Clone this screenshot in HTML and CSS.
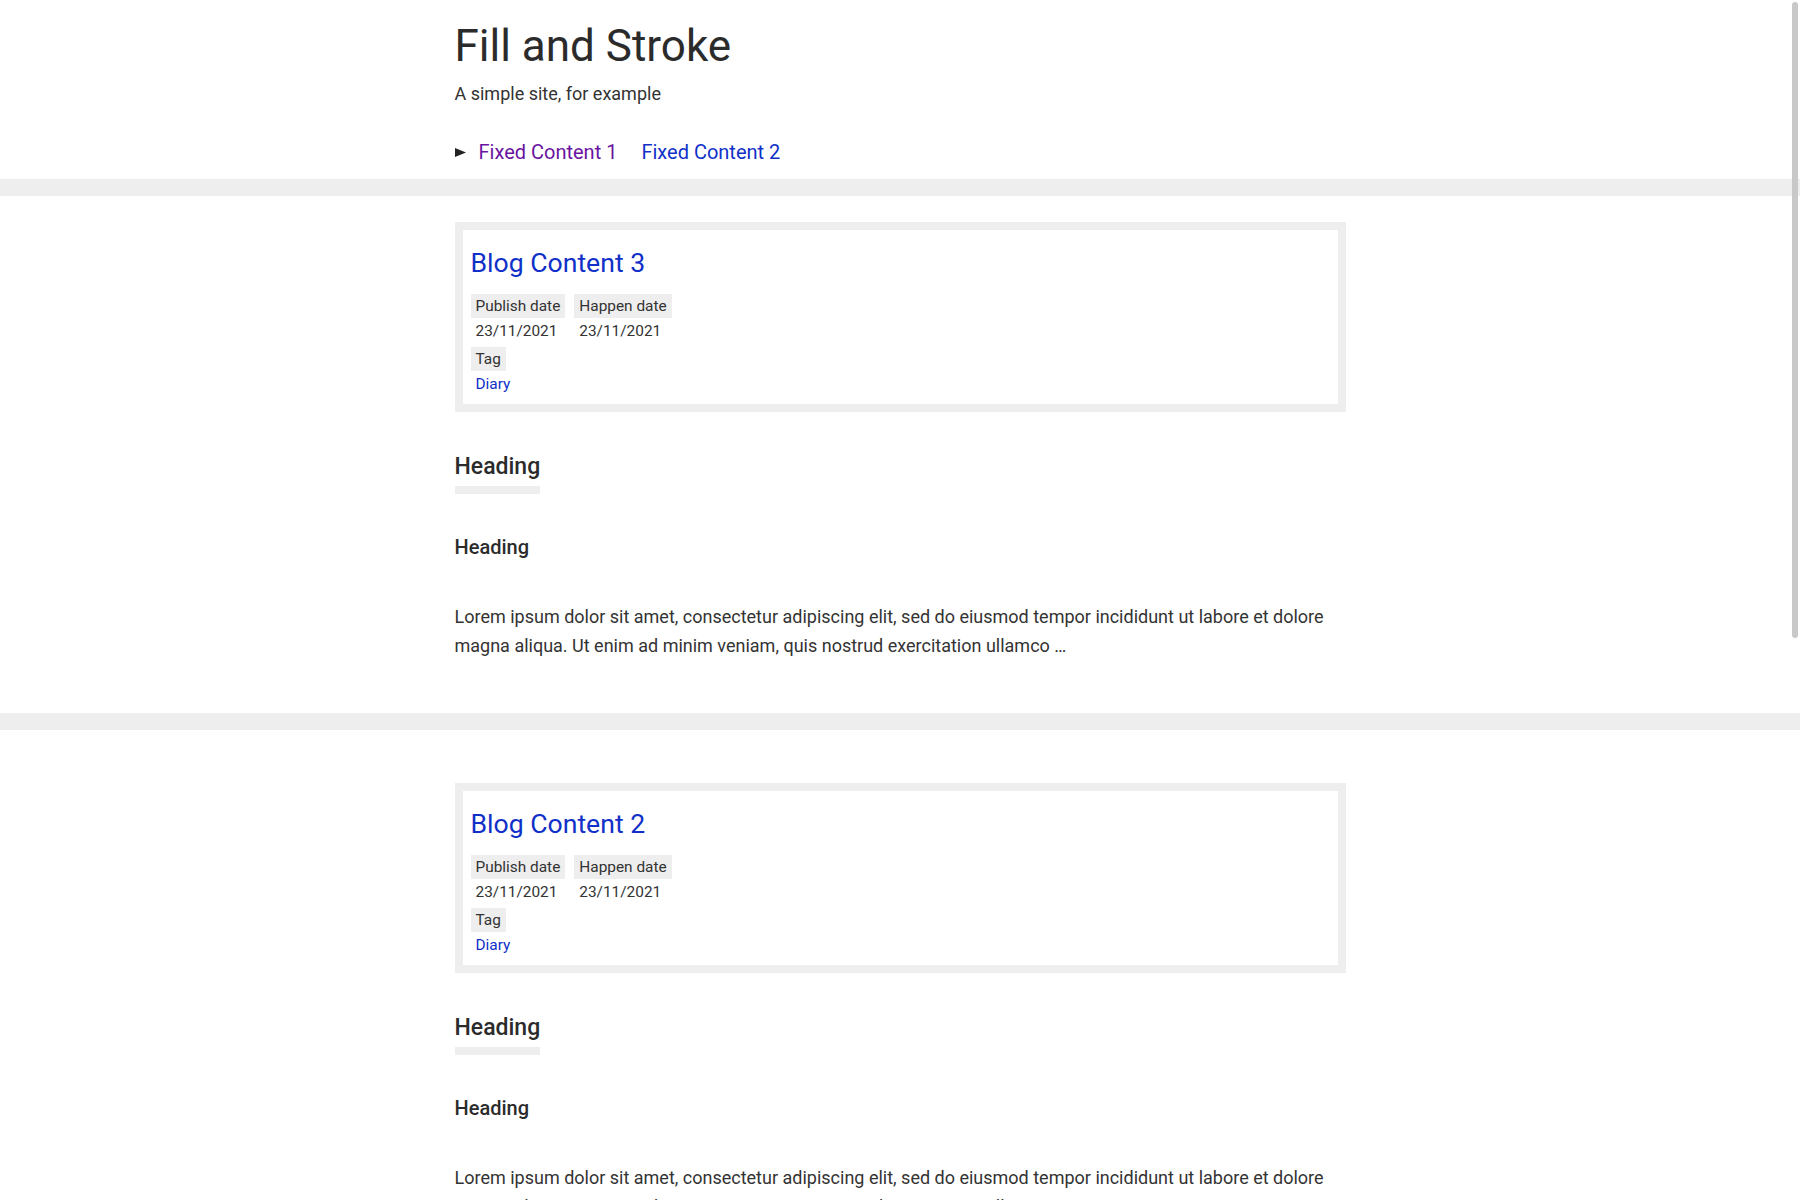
FILE: index.html
```html
<!DOCTYPE html>
<html lang="en">
<head>
<meta charset="utf-8">
<title>Fill and Stroke</title>
<link rel="stylesheet" href="styles.css">
</head>
<body>
<header class="site-header">
  <div class="wrap">
    <h1 class="site-title">Fill and Stroke</h1>
    <p class="site-tagline">A simple site, for example</p>
    <nav class="site-nav">
      <span class="nav-marker"><svg width="11" height="9" viewBox="0 0 11 9"><path d="M0 0 L11 4.5 L0 9 Z" fill="#222"/></svg></span>
      <a class="visited" href="#">Fixed Content 1</a>
      <a href="#">Fixed Content 2</a>
    </nav>
  </div>
</header>

<main>
  <article class="post">
    <div class="wrap">
      <div class="post-card">
        <h2 class="post-title"><a href="#">Blog Content 3</a></h2>
        <div class="meta-row">
          <dl class="field"><dt>Publish date</dt><dd>23/11/2021</dd></dl>
          <dl class="field"><dt>Happen date</dt><dd>23/11/2021</dd></dl>
        </div>
        <div class="meta-row">
          <dl class="field"><dt>Tag</dt><dd><a href="#">Diary</a></dd></dl>
        </div>
      </div>
      <h2 class="section-heading">Heading</h2>
      <h3 class="sub-heading">Heading</h3>
      <p class="excerpt">Lorem ipsum dolor sit amet, consectetur adipiscing elit, sed do eiusmod tempor incididunt ut labore et dolore magna aliqua. Ut enim ad minim veniam, quis nostrud exercitation ullamco …</p>
    </div>
  </article>

  <article class="post">
    <div class="wrap">
      <div class="post-card">
        <h2 class="post-title"><a href="#">Blog Content 2</a></h2>
        <div class="meta-row">
          <dl class="field"><dt>Publish date</dt><dd>23/11/2021</dd></dl>
          <dl class="field"><dt>Happen date</dt><dd>23/11/2021</dd></dl>
        </div>
        <div class="meta-row">
          <dl class="field"><dt>Tag</dt><dd><a href="#">Diary</a></dd></dl>
        </div>
      </div>
      <h2 class="section-heading">Heading</h2>
      <h3 class="sub-heading">Heading</h3>
      <p class="excerpt">Lorem ipsum dolor sit amet, consectetur adipiscing elit, sed do eiusmod tempor incididunt ut labore et dolore magna aliqua. Ut enim ad minim veniam, quis nostrud exercitation ullamco …</p>
    </div>
  </article>

  <article class="post">
    <div class="wrap">
      <div class="post-card">
        <h2 class="post-title"><a href="#">Blog Content 1</a></h2>
        <div class="meta-row">
          <dl class="field"><dt>Publish date</dt><dd>23/11/2021</dd></dl>
          <dl class="field"><dt>Happen date</dt><dd>23/11/2021</dd></dl>
        </div>
        <div class="meta-row">
          <dl class="field"><dt>Tag</dt><dd><a href="#">Diary</a></dd></dl>
        </div>
      </div>
      <h2 class="section-heading">Heading</h2>
      <h3 class="sub-heading">Heading</h3>
      <p class="excerpt">Lorem ipsum dolor sit amet, consectetur adipiscing elit, sed do eiusmod tempor incididunt ut labore et dolore magna aliqua. Ut enim ad minim veniam, quis nostrud exercitation ullamco …</p>
    </div>
  </article>
</main>

<div class="scroll-thumb"></div>
</body>
</html>
```
FILE: styles.css
```css
html {
  scrollbar-width: none;
}
html::-webkit-scrollbar {
  display: none;
  width: 0;
}
body {
  margin: 0;
  background: #fff;
  color: #333;
  font-family: Roboto, "Liberation Sans", sans-serif;
  font-size: 18px;
  line-height: 29px;
}
a {
  color: #1030c8;
  text-decoration: none;
}
a.visited {
  color: #6a14a0;
}
.wrap {
  width: 891px;
  margin: 0 auto;
}

/* header */
.site-header {
  padding-top: 19px;
  padding-bottom: 12px;
  border-bottom: 17px solid #eeeeee;
}
.site-title {
  margin: 0;
  font-size: 44px;
  line-height: 54px;
  font-weight: 400;
  color: #2b2b2b;
}
.site-tagline {
  margin: 7px 0 0;
  font-size: 18px;
  line-height: 27px;
  color: #333;
}
.site-nav {
  margin-top: 30px;
  display: flex;
  align-items: center;
  height: 30px;
  font-size: 20px;
  line-height: 30px;
}
.nav-marker {
  display: flex;
  width: 11px;
  margin-right: 13px;
}
.site-nav a + a {
  margin-left: 24px;
}

/* posts */
.post {
  padding: 53px 0 53px;
  border-bottom: 17px solid #eeeeee;
}
.post:first-child {
  padding-top: 26px;
}
.post-card {
  border: 8px solid #eeeeee;
  padding: 15px 8px 8px;
}
.post-title {
  margin: 0 0 13px;
  font-size: 26.6px;
  line-height: 36px;
  font-weight: 400;
}
.meta-row {
  display: flex;
  gap: 9px;
}
.meta-row + .meta-row {
  margin-top: 4px;
}
.field {
  margin: 0;
  font-size: 15.4px;
  line-height: 24px;
}
.field dt {
  width: fit-content;
  background: #eeeeee;
  padding: 0 5px;
}
.field dd {
  margin: 0;
  padding: 1px 5px 0;
}
.section-heading {
  display: inline-block;
  margin: 40px 0 0;
  padding-bottom: 4px;
  border-bottom: 8px solid #eeeeee;
  font-size: 23px;
  line-height: 30px;
  font-weight: 500;
  color: #2b2b2b;
}
.sub-heading {
  margin: 39px 0 0;
  font-size: 20px;
  line-height: 28px;
  font-weight: 500;
  color: #2b2b2b;
}
.excerpt {
  margin: 41px 0 0;
  font-size: 18px;
  line-height: 29px;
}

.scroll-thumb {
  position: fixed;
  top: 2px;
  right: 2px;
  width: 6px;
  height: 636px;
  border-radius: 3px;
  background: #c8c8c8;
}
```
